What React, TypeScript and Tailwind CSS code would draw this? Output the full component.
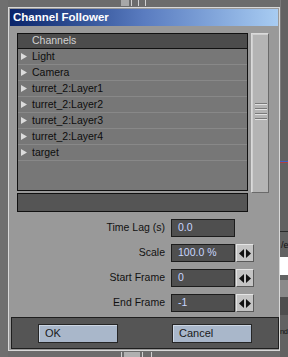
import React from 'react';

const font = { fontFamily: '"Liberation Sans", Arial, sans-serif' };

const channels = [
  'Light',
  'Camera',
  'turret_2:Layer1',
  'turret_2:Layer2',
  'turret_2:Layer3',
  'turret_2:Layer4',
  'target',
];

/** small right-pointing arrow used by channel rows */
function RowArrow() {
  return (
    <svg width="6" height="7" viewBox="0 0 6 7" className="shrink-0">
      <polygon points="0,0 6,3.5 0,7" fill="#dcdcdc" />
    </svg>
  );
}

/** the ◀▶ spinner next to a numeric field */
function Spinner() {
  return (
    <div className="flex h-[18px] w-[18px] items-center justify-center border-t border-l border-[#e4e4e4] border-r border-b border-r-[#5a5a5a] border-b-[#5a5a5a] bg-[#c4c4c4]">
      <svg width="12" height="9" viewBox="0 0 12 9">
        <polygon points="5,0 5,9 0,4.5" fill="#111" />
        <polygon points="7,0 7,9 12,4.5" fill="#111" />
      </svg>
    </div>
  );
}

function Field({ label, value, spin }: { label: string; value: string; spin?: boolean }) {
  return (
    <div className="flex h-[18px] items-center">
      <div className="w-[156px] pr-[1px] text-right text-[10.5px] text-[#111]">{label}</div>
      <div className="ml-[5px] flex h-[18px] w-[64px] items-center border border-[#1c1c1c] bg-[#4f4f4f] pl-[6px] text-[10.5px] text-[#c9d6ff]">
        {value}
      </div>
      {spin && (
        <div className="ml-[1px]">
          <Spinner />
        </div>
      )}
    </div>
  );
}

function DialogButton({ label }: { label: string }) {
  return (
    <div className="flex h-[19px] w-[80px] items-center border border-[#262626] bg-[#a9b7ca] pl-[6px] text-[11px] text-[#1a1a1a] shadow-[inset_1px_1px_0_#cdd7e4]">
      {label}
    </div>
  );
}

export default function App() {
  return (
    <div className="relative flex h-[357px] w-[288px] overflow-hidden bg-[#6c6c6c]" style={font}>
      {/* left strip of the app behind */}
      <div className="w-[8px] shrink-0 bg-[#6f6f6f]" />

      {/* dialog */}
      <div className="flex w-[272px] shrink-0 flex-col pt-[7px]">
        <div className="flex h-[344px] flex-col border border-[#d8d8d8] bg-[#999999] p-[1px]">
          {/* title bar */}
          <div className="flex h-[17px] items-center bg-gradient-to-r from-[#0a246a] via-[#5a7cc0] to-[#a8ccf2] pl-[3px] text-[11.5px] font-bold text-white">
            Channel Follower
          </div>

          {/* channel list + scrollbar */}
          <div className="mt-[7px] flex items-start pl-[7px]">
            <div className="flex h-[158px] w-[231px] flex-col border border-[#111] bg-[#777777]">
              <div className="flex h-[15px] shrink-0 items-center border-b border-[#111] bg-[#4c4c4c] pl-[14px] text-[10.5px] text-[#d2d2d2]">
                Channels
              </div>
              {channels.map((c) => (
                <div
                  key={c}
                  className="flex h-[16px] shrink-0 items-center border-b border-[#888888] pl-[3px] text-[10.5px] text-[#0d0d0d]"
                >
                  <RowArrow />
                  <span className="ml-[5px]">{c}</span>
                </div>
              ))}
            </div>
            <div className="ml-[3px] flex h-[160px] w-[18px] flex-col items-center border-t border-l border-[#dadada] border-r border-b border-r-[#6a6a6a] border-b-[#6a6a6a] bg-[#b4b4b4]">
              <div className="flex h-full w-full flex-col items-center border-l border-t border-[#cfcfcf]">
                <div className="mt-[68px] flex w-[12px] flex-col gap-[3px]">
                  <div className="h-[2px] border-t border-b border-t-[#7a7a7a] border-b-[#e2e2e2]" />
                  <div className="h-[2px] border-t border-b border-t-[#7a7a7a] border-b-[#e2e2e2]" />
                  <div className="h-[2px] border-t border-b border-t-[#7a7a7a] border-b-[#e2e2e2]" />
                  <div className="h-[2px] border-t border-b border-t-[#7a7a7a] border-b-[#e2e2e2]" />
                </div>
              </div>
            </div>
          </div>

          {/* info bar */}
          <div className="ml-[7px] h-[19px] w-[231px] border border-[#111] bg-[#555555]" />

          {/* numeric fields */}
          <div className="mt-[7px] flex flex-col gap-[7px]">
            <Field label="Time Lag (s)" value="0.0" />
            <Field label="Scale" value="100.0 %" spin />
            <Field label="Start Frame" value="0" spin />
            <Field label="End Frame" value="-1" spin />
          </div>

          {/* button bar */}
          <div className="mt-[5px] ml-[1px] flex h-[32px] w-[268px] items-start border border-[#1e1e1e] bg-[#555555] pt-[6px]">
            <div className="ml-[26px]">
              <DialogButton label="OK" />
            </div>
            <div className="ml-[54px]">
              <DialogButton label="Cancel" />
            </div>
          </div>
        </div>
      </div>

      {/* right strip: part of the app behind */}
      <div className="flex w-[8px] shrink-0 flex-col bg-[#626262]">
        <div className="h-[120px] border-l border-[#7a7a7a]" />
        <div className="mt-[41px] h-[1px] bg-[#4060c0]" />
        <div className="h-[1px] bg-[#b04040]" />
        <div className="mt-[68px] h-[1px] bg-[#2a2a2a]" />
        <div className="mt-[8px] pl-[1px] text-[9px] leading-[10px] text-[#111]">/e</div>
        <div className="mt-[7px] h-[18px] bg-white" />
        <div className="mt-[5px] h-[17px] bg-[#8a8a8a]" />
        <div className="h-[18px] bg-[#4e4e4e]" />
        <div className="mt-[12px] text-[7.5px] leading-[10px] tracking-[-0.5px] text-[#111]">nd</div>
      </div>

      {/* bits of the app behind, peeking above and below the dialog */}
      <div className="absolute left-[121px] top-0 flex h-[6px] gap-[2px]">
        <div className="w-[8px] bg-[#a8a8a8]" />
        <div className="w-[1px] bg-[#d0d0d0]" />
        <div className="ml-[4px] w-[1px] bg-[#d0d0d0]" />
        <div className="ml-[4px] w-[1px] bg-[#d0d0d0]" />
      </div>
      <div className="absolute bottom-0 left-[121px] flex h-[5px] gap-[2px]">
        <div className="w-[1px] bg-[#d0d0d0]" />
        <div className="w-[16px] bg-[#b0b0b0]" />
        <div className="w-[1px] bg-[#d0d0d0]" />
        <div className="ml-[6px] w-[1px] bg-[#d0d0d0]" />
      </div>
    </div>
  );
}
